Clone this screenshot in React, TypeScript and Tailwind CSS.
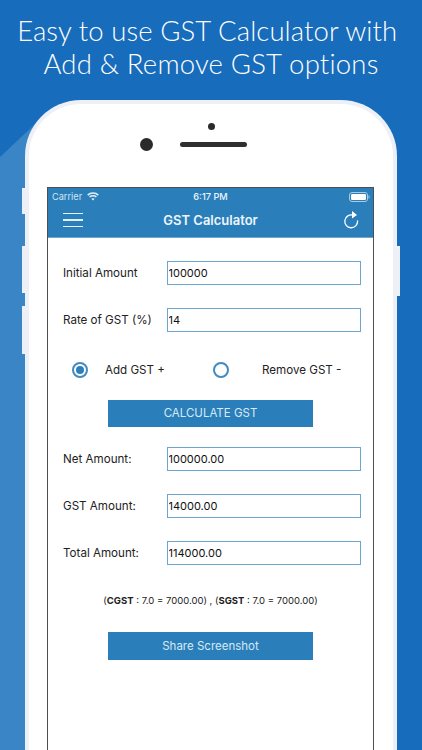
import React from "react";

const ui = "font-['Inter','Liberation_Sans',sans-serif]";

function AmountRow({ label, value, className }: { label: string; value: string; className?: string }) {
  return (
    <div className={`flex items-center h-[24px] ${className || ""}`}>
      <label className="w-[104px] pt-[2px] text-[11.6px] text-[#222]">{label}</label>
      <input
        readOnly
        value={value}
        className={`${ui} w-[194px] h-[24px] border border-[#6aa4cf] px-[0.5px] text-[11px] text-[#111] outline-none bg-white`}
      />
    </div>
  );
}

function Radio({ checked }: { checked?: boolean }) {
  return (
    <span className="w-[16px] h-[16px] rounded-full border-2 border-[#3f8bc2] flex items-center justify-center shrink-0">
      {checked && <span className="w-[8px] h-[8px] rounded-full bg-[#2b80bb]" />}
    </span>
  );
}

function ActionButton({ children, className }: { children: React.ReactNode; className?: string }) {
  return (
    <button className={`block mx-auto w-[205px] bg-[#2a7fba] text-[#d8e9f5] ${className || ""}`}>
      {children}
    </button>
  );
}

function Wifi() {
  return (
    <svg width="12" height="9" viewBox="0 0 12 9" fill="none" stroke="#e6f0f8" strokeWidth="1.5">
      <path d="M0.7 3.1 C3.6 0.4 8.4 0.4 11.3 3.1" />
      <path d="M2.6 5 C4.4 3.4 7.6 3.4 9.4 5" />
      <path d="M6 8.6 L4.3 6.7 C5.3 6 6.7 6 7.7 6.7 Z" fill="#e6f0f8" stroke="none" />
    </svg>
  );
}

function Battery() {
  return (
    <svg width="21" height="10" viewBox="0 0 21 10">
      <rect x="0.5" y="0.5" width="18" height="9" rx="2.5" fill="none" stroke="#a9cbe3" />
      <rect x="2" y="2" width="15" height="6" rx="1.2" fill="#fff" />
      <rect x="19.5" y="3.5" width="1" height="3" fill="#a9cbe3" />
    </svg>
  );
}

function RefreshIcon() {
  return (
    <svg width="18" height="20" viewBox="0 0 18 20" fill="none">
      <path d="M11 5.2 A6.4 6.4 0 1 0 15.6 11" stroke="#fff" strokeWidth="1.3" strokeLinecap="round" />
      <path d="M10 1 L15 4.9 L10 8.4 Z" fill="#fff" />
    </svg>
  );
}

export default function App() {
  return (
    <div className="relative w-[422px] h-[750px] overflow-hidden bg-[#176cbb]">
      {/* lighter diagonal behind the phone */}
      <svg className="absolute left-0 top-0" width="422" height="750" viewBox="0 0 422 750">
        <polygon points="0,157 50,110 50,750 0,750" fill="#3a85c6" />
      </svg>

      <div className="relative">
        <h1 className="pt-[14px] h-[100px] text-center text-white text-[27.5px] leading-[33px] font-light font-['Lato','Open_Sans',sans-serif]">
          <span className="tracking-[0.1px]">Easy to use GST Calculator with&nbsp;</span>
          <br />
          <span className="tracking-[0.2px]">Add &amp; Remove GST options</span>
        </h1>

        <div className={`relative mx-[25px] w-[372px] h-[700px] rounded-t-[56px] border-[4px] border-b-0 border-[#eef0f7] bg-white ${ui}`}>
          {/* hardware buttons */}
          <span className="absolute left-[-7px] top-[84px] w-[3px] h-[26px] bg-[#eef0f7]" />
          <span className="absolute left-[-7px] top-[142px] w-[3px] h-[47px] bg-[#eef0f7]" />
          <span className="absolute left-[-7px] top-[202px] w-[3px] h-[48px] bg-[#eef0f7]" />
          <span className="absolute right-[-7px] top-[142px] w-[3px] h-[50px] bg-[#eef0f7]" />

          {/* camera and speaker */}
          <div className="flex flex-col items-center h-[83px] pt-[19px]">
            <span className="w-[7px] h-[7px] rounded-full bg-[#2a2a2a]" />
            <div className="flex items-center w-full pl-[111px] mt-[8px]">
              <span className="w-[13px] h-[13px] rounded-full bg-[#2a2a2a]" />
              <span className="ml-[27px] w-[67px] h-[5px] rounded-full bg-[#2f2f2f]" />
            </div>
          </div>

          {/* app screen */}
          <div className="mx-[18px] w-[327px] h-[620px] border border-[#4a4f55] bg-white">
            <div className="bg-[#2a7fba] h-[50px] border-b border-[#6ea6cf]">
              <div className="relative flex items-center justify-between h-[18px] pl-[4px] pr-[3px] text-[#d3e5f2] text-[9.2px]">
                <div className="flex items-center gap-[5px]">
                  <span>Carrier</span>
                  <Wifi />
                </div>
                <span className="absolute left-0 right-0 text-center text-[#eef5fa] font-medium">6:17 PM</span>
                <Battery />
              </div>
              <div className="relative flex items-center justify-between h-[28px] pl-[15px] pr-[13px]">
                <div className="flex flex-col gap-[5px] w-[20px]">
                  <span className="h-[1.5px] bg-[#e4eff7]" />
                  <span className="h-[1.5px] bg-[#e4eff7]" />
                  <span className="h-[1.5px] bg-[#e4eff7]" />
                </div>
                <span className="absolute left-0 right-0 pt-[2px] text-center text-[13px] font-semibold text-[#eef5fa]">GST Calculator</span>
                <RefreshIcon />
              </div>
            </div>

            <div className="pl-[15px] pt-[23px]">
              <AmountRow label="Initial Amount" value="100000" />
              <AmountRow label="Rate of GST (%)" value="14" className="mt-[23px]" />

              <div className="flex items-center mt-[30px] h-[16px] pl-[9px] text-[11.6px] text-[#222]">
                <Radio checked />
                <span className="ml-[17px] w-[108px] pt-[2px]">Add GST +</span>
                <Radio />
                <span className="ml-[33px] pt-[2px]">Remove GST -</span>
              </div>
            </div>

            <ActionButton className="mt-[22px] h-[27px] text-[11.5px]">CALCULATE GST</ActionButton>

            <div className="pl-[15px] mt-[20px]">
              <AmountRow label="Net Amount:" value="100000.00" />
              <AmountRow label="GST Amount:" value="14000.00" className="mt-[23px]" />
              <AmountRow label="Total Amount:" value="114000.00" className="mt-[23px]" />
            </div>

            <p className="mt-[29px] text-center text-[9.5px] leading-[14px] text-[#222]">
              (<b>CGST</b> : 7.0 = 7000.00) , (<b>SGST</b> : 7.0 = 7000.00)
            </p>

            <ActionButton className="mt-[24px] h-[28px] pt-[2px] text-[11.5px]">Share Screenshot</ActionButton>
          </div>
        </div>
      </div>
    </div>
  );
}
